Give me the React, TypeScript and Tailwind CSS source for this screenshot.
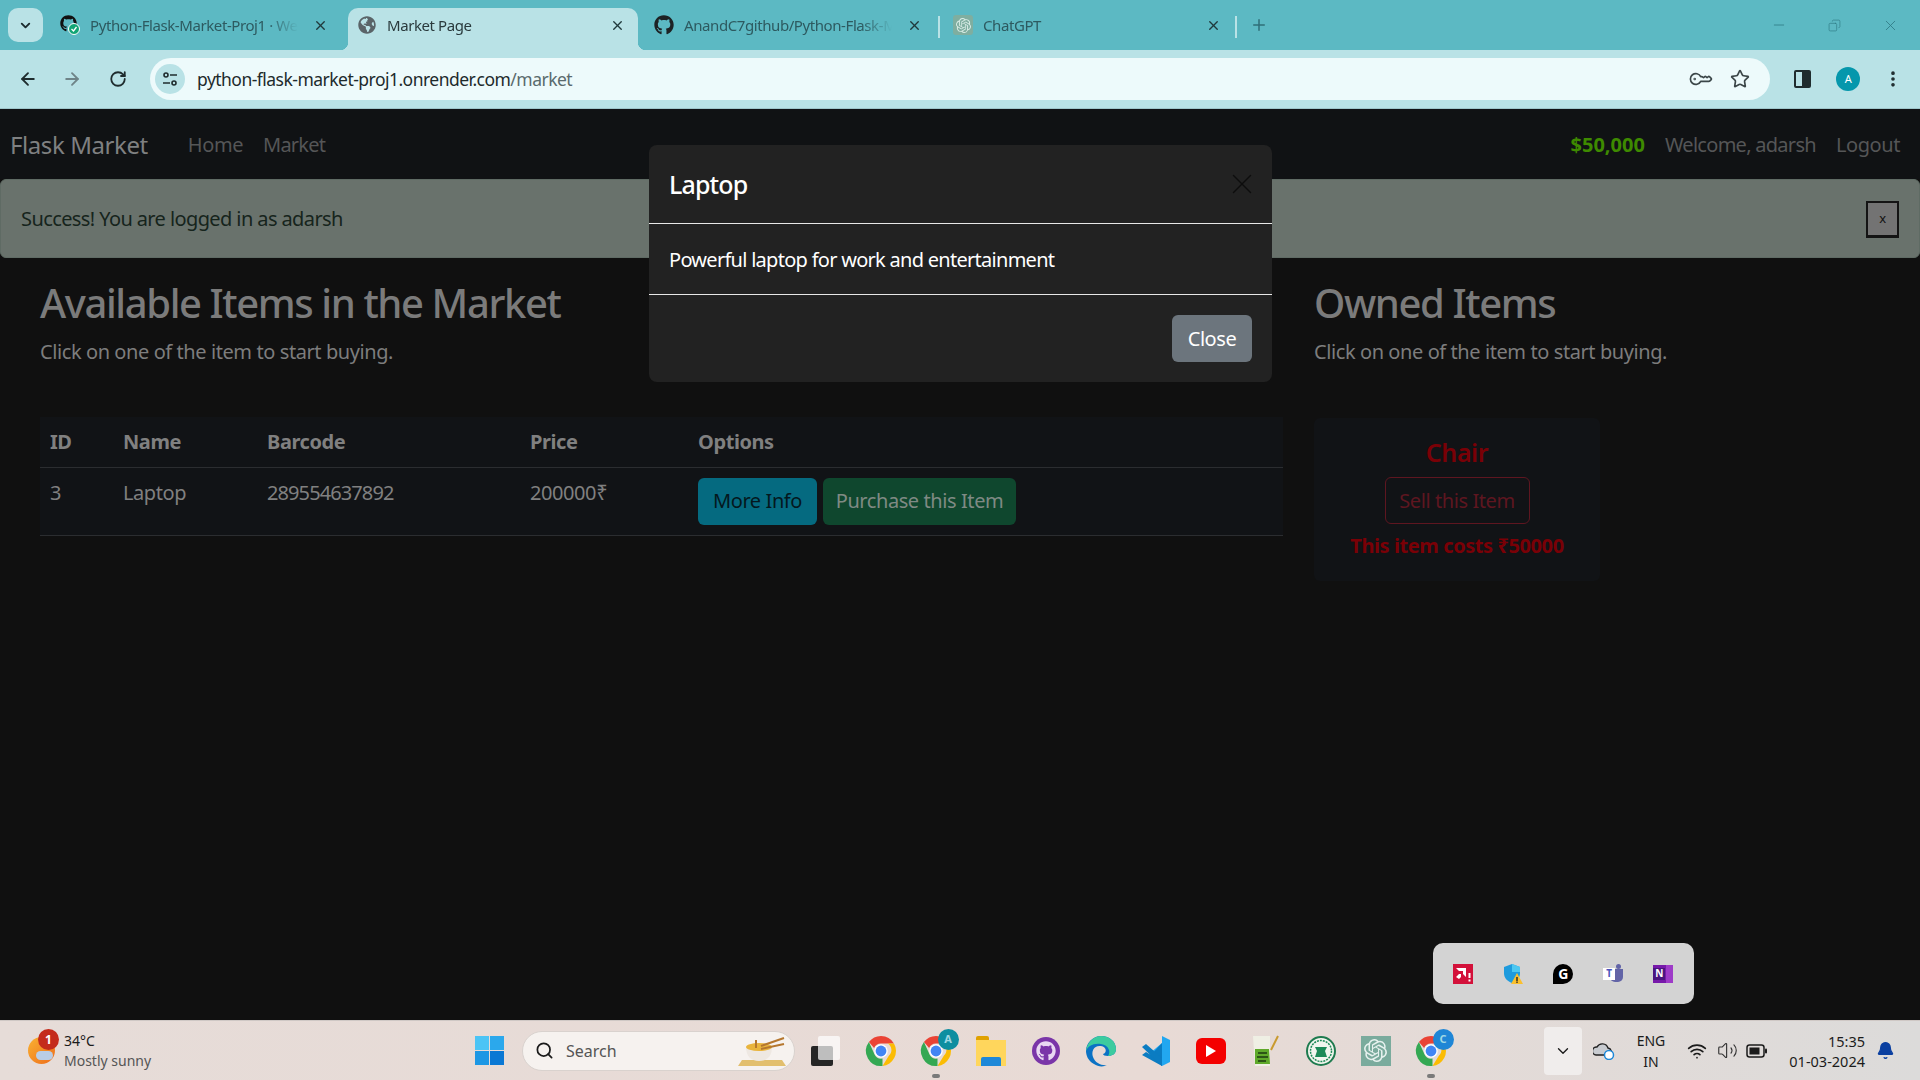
import { ArrowLeft, ArrowRight, RotateCw, ChevronDown, X, Plus, Minus, Star, KeyRound, EllipsisVertical, Search, Bell, Wifi, Volume2, Copy } from "lucide-react";
import { FaGithub, FaGlobeAmericas } from "react-icons/fa";
import { SiOpenai } from "react-icons/si";
import type { ReactNode } from "react";

const ui = "font-['Noto_Sans','Open_Sans',sans-serif] tracking-[-0.026em]";

function ChromeIcon({ size = 36 }: { size?: number }) {
    return (
        <svg width={size} height={size} viewBox="0 0 48 48">
            <path d="M24 4a20 20 0 0 1 17.3 10H24a10 10 0 0 0-9.2 6L7.900 12.100A20 20 0 0 1 24 4z" fill="#EA4335" />
            <path d="M41.300 14A20 20 0 0 1 26 43.900L34.600 30A10 10 0 0 0 33 14z" fill="#FBBC04" />
            <path d="M26 43.900A20 20 0 0 1 7.900 12.100L15.600 29a10 10 0 0 0 10.400 5z" fill="#34A853" />
            <circle cx="24" cy="24" r="9" fill="#fff" />
            <circle cx="24" cy="24" r="7.200" fill="#4285F4" />
        </svg>
    );
}

function ProfileChrome({ letter, color }: { letter: string; color: string }) {
    return (
        <div className="relative">
            <ChromeIcon />
            <div className="absolute -right-[5px] -top-[4px] flex h-[21px] w-[21px] items-center justify-center rounded-full text-[11px] font-bold text-[#9fd8e4]" style={{ background: color }}>
                {letter}
            </div>
        </div>
    );
}

function TaskIcon({ children, running }: { children: ReactNode; running?: boolean }) {
    return (
        <div className="relative flex h-[48px] w-[55px] items-center justify-center">
            {children}
            {running && <div className="absolute bottom-[-3px] h-[4px] w-[8px] rounded-full bg-[#7a7a7a]" />}
        </div>
    );
}

function BrowserTab({ icon, title, active }: { icon: ReactNode; title: string; active?: boolean }) {
    return (
        <div className="relative flex h-[42px] w-[297px] items-center pb-[8px]">
            {active && (
                <>
                    <div className="absolute inset-y-0 left-[3px] right-[4px] rounded-t-[10px] bg-[#B9E2E6]" />
                    <div className="absolute bottom-0 left-[-5px] h-[8px] w-[8px] bg-[radial-gradient(circle_at_0_0,transparent_8px,#B9E2E6_8.5px)]" />
                    <div className="absolute bottom-0 right-[-4px] h-[8px] w-[8px] bg-[radial-gradient(circle_at_100%_0,transparent_8px,#B9E2E6_8.5px)]" />
                </>
            )}
            <div className="relative ml-[12px] flex h-[20px] w-[20px] items-center justify-center">{icon}</div>
            <div className={`relative ml-[10px] w-[208px] overflow-hidden whitespace-nowrap text-[15px] [mask-image:linear-gradient(to_right,black_85%,transparent)] ${active ? "text-[#2a3a3d]" : "text-[#2d5a60]"}`}>
                {title}
            </div>
            <X size={15} strokeWidth={2.2} className="relative ml-[15px] text-[#20393c]" />
        </div>
    );
}

function BrowserChrome() {
    return (
        <div className="flex flex-col">
            <div className="flex h-[50px] bg-[#5CB9C3] pt-[8px]">
                <div className="ml-[8px] flex h-[34px] w-[35px] items-center justify-center rounded-[10px] bg-[#B9E2E6]">
                    <ChevronDown size={15} strokeWidth={3} className="text-[#1b2b2e]" />
                </div>
                <div className="w-[5px]" />
                <BrowserTab
                    title="Python-Flask-Market-Proj1 · Web Service"
                    icon={
                        <div className="relative h-[20px] w-[20px]">
                            <FaGithub size={17} className="text-[#111]" />
                            <svg width="12" height="12" viewBox="0 0 12 12" className="absolute bottom-0 right-0">
                                <circle cx="6" cy="6" r="5.500" fill="#12a575" stroke="#fff" />
                                <path d="M3.500 6l2 2 3-4" fill="none" stroke="#fff" strokeWidth="1.300" />
                            </svg>
                        </div>
                    }
                />
                <BrowserTab active title="Market Page" icon={<FaGlobeAmericas size={18} className="text-[#5a6468]" />} />
                <BrowserTab title="AnandC7github/Python-Flask-Market" icon={<FaGithub size={20} className="text-[#1d2224]" />} />
                <div className="mt-[8px] h-[22px] w-[2px] -translate-x-[1px] bg-[#B9E2E6]" />
                <BrowserTab
                    title="ChatGPT"
                    icon={<div className="flex h-[20px] w-[20px] items-center justify-center rounded-[3px] bg-[#7FAEA0]"><SiOpenai size={15} className="text-[#d9ece6]" /></div>}
                />
                <div className="mt-[8px] h-[22px] w-[2px] -translate-x-[3px] bg-[#B9E2E6]" />
                <Plus size={18} className="mt-[8px] ml-[10px] text-[#2f6f78]" />
                <div className="ml-auto flex items-center pb-[8px] text-[#2f7a84]">
                    <Minus size={16} strokeWidth={1.2} />
                    <Copy size={13} strokeWidth={1.2} className="ml-[41px] -scale-x-100" />
                    <X size={17} strokeWidth={1.2} className="ml-[41px] mr-[21px]" />
                </div>
            </div>
            <div className="flex h-[59px] items-center border-b border-[#9FC6CB] bg-[#B9E2E6]">
                <ArrowLeft size={20} strokeWidth={2.2} className="ml-[18px] text-[#1f2c2e]" />
                <ArrowRight size={20} strokeWidth={2.2} className="ml-[24px] text-[#6f8488]" />
                <RotateCw size={18} strokeWidth={2.4} className="ml-[27px] text-[#1f2c2e]" />
                <div className="ml-[23px] flex h-[42px] w-[1620px] items-center rounded-full bg-[#EDFAFB]">
                    <div className="ml-[5px] flex h-[30px] w-[30px] items-center justify-center rounded-full bg-[#B9E2E6]">
                        <svg width="16" height="16" viewBox="0 0 16 16" fill="none" stroke="#1f2c2e" strokeWidth="1.600">
                            <circle cx="4" cy="4" r="2" />
                            <path d="M8 4h7M1 12h7" />
                            <circle cx="12" cy="12" r="2" />
                        </svg>
                    </div>
                    <div className="ml-[12px] mt-[1px] text-[17.5px] tracking-[-0.03em] text-[#1d2a2c]">
                        python-flask-market-proj1.onrender.com<span className="text-[#5a6a6d]">/market</span>
                    </div>
                    <KeyRound size={20} strokeWidth={2} className="ml-auto rotate-[-135deg] text-[#3b4648]" />
                    <Star size={20} strokeWidth={2} className="ml-[20px] mr-[20px] text-[#3b4648]" />
                </div>
                <div className="ml-[24px] flex h-[18px] w-[17px] rounded-[2px] border-[2.5px] border-[#1f2c2e]">
                    <div className="ml-auto h-full w-[7px] bg-[#1f2c2e]" />
                </div>
                <div className="ml-[25px] flex h-[24px] w-[24px] items-center justify-center rounded-full bg-[#0597AC] text-[11px] text-white">A</div>
                <EllipsisVertical size={20} strokeWidth={2.4} className="ml-[23px] text-[#1f2c2e]" />
            </div>
        </div>
    );
}

function Market() {
    return (
        <div className="h-[911px] bg-[#101010]">
            <div className="flex h-[70px] items-center bg-[#101214] pl-[10px] pr-[20px] pt-[2px] text-[20px] text-[#555657]">
                <div className="text-[24px] text-[#7f8081]">Flask Market</div>
                <div className="ml-[40px]">Home</div>
                <div className="ml-[20px] tracking-[-0.04em]">Market</div>
                <div className="ml-auto font-bold tracking-normal text-[#3E8A00]">$50,000</div>
                <div className="ml-[20px] tracking-[-0.036em]">Welcome, adarsh</div>
                <div className="ml-[20px]">Logout</div>
            </div>
            <div className="flex h-[79px] items-center rounded-[6px] border border-[#5f6b64] bg-[#69726C] pl-[20px] pr-[20px] pt-[1px] text-[20px] tracking-[-0.03em] text-[#16241c]">
                <div>Success! You are logged in as adarsh</div>
                <div className="ml-auto flex h-[37px] w-[33px] items-center justify-center border-2 border-b-[3px] border-[#141414] bg-[#737373] text-[13px] text-[#111]">x</div>
            </div>
            <div className="flex pl-[40px] pt-[15px]">
                <div className="w-[1243px]">
                    <h1 className="text-[40px] font-medium leading-[60px] tracking-[-0.035em] text-[#7b7b7b]">Available Items in the Market</h1>
                    <p className="mt-[4px] text-[20px] leading-[30px] text-[#7d7d7d]">Click on one of the item to start buying.</p>
                    <table className="mt-[50px] w-full table-fixed border-collapse bg-[#111316] text-left text-[20px] text-[#808080]">
                        <colgroup>
                            <col className="w-[72px]" />
                            <col className="w-[144px]" />
                            <col className="w-[263px]" />
                            <col className="w-[168px]" />
                            <col />
                        </colgroup>
                        <thead>
                            <tr className="h-[50px] border-b border-[#2b2d30]">
                                <th className="pl-[10px] font-bold">ID</th>
                                <th className="pl-[11px] font-bold">Name</th>
                                <th className="pl-[11px] font-bold">Barcode</th>
                                <th className="pl-[11px] font-bold">Price</th>
                                <th className="pl-[11px] font-bold">Options</th>
                            </tr>
                        </thead>
                        <tbody>
                            <tr className="h-[68px] border-b border-[#2b2d30] align-top">
                                <td className="pl-[10px] pt-[10px]">3</td>
                                <td className="pl-[11px] pt-[10px]">Laptop</td>
                                <td className="pl-[11px] pt-[10px] tracking-[-0.045em]">289554637892</td>
                                <td className="pl-[11px] pt-[10px]">200000₹</td>
                                <td className="pl-[11px] pt-[10px]">
                                    <div className="flex gap-[6px]">
                                        <button className="h-[47px] w-[119px] rounded-[6px] bg-[#056A80] text-[#04181e]">More Info</button>
                                        <button className="h-[47px] w-[193px] rounded-[6px] bg-[#0F472E] text-[#7f8a84]">Purchase this Item</button>
                                    </div>
                                </td>
                            </tr>
                        </tbody>
                    </table>
                </div>
                <div className="ml-[31px]">
                    <h1 className="text-[40px] font-medium leading-[60px] tracking-[-0.035em] text-[#7b7b7b]">Owned Items</h1>
                    <p className="mt-[4px] text-[20px] leading-[30px] text-[#7d7d7d]">Click on one of the item to start buying.</p>
                    <div className="mt-[51px] flex h-[163px] w-[286px] flex-col items-center rounded-[6px] bg-[#111316] pt-[16px]">
                        <div className="text-[25px] font-semibold leading-[36px] text-[#7A0006]">Chair</div>
                        <button className="mt-[7px] h-[47px] w-[145px] rounded-[6px] border border-[#5e1620] text-[20px] text-[#5e1620]">Sell this Item</button>
                        <div className="mt-[7px] text-[20px] font-bold leading-[30px] text-[#7A0006]">This item costs ₹50000</div>
                    </div>
                </div>
            </div>
        </div>
    );
}

function ItemModal() {
    return (
        <div className="absolute left-[649px] top-[145px] flex h-[237px] w-[623px] flex-col rounded-[8px] bg-[#222222] text-white">
            <div className="flex h-[79px] items-center justify-between border-b border-[#e8e8e8] pl-[20px] pr-[13px]">
                <div className="pt-[2px] text-[25px] font-medium tracking-[-0.034em]">Laptop</div>
                <X size={34} strokeWidth={1} className="text-[#0d0d0d]" />
            </div>
            <div className="flex h-[71px] items-center border-b border-[#e8e8e8] px-[20px] pt-[2px] text-[20px] tracking-[-0.036em]">Powerful laptop for work and entertainment</div>
            <div className="flex flex-1 items-center justify-end px-[20px]">
                <button className="h-[47px] w-[80px] rounded-[6px] bg-[#6C757D] text-[20px]">Close</button>
            </div>
        </div>
    );
}

function TrayPopup() {
    return (
        <div className="absolute left-[1433px] top-[943px] flex h-[61px] w-[261px] items-center rounded-[10px] bg-[#D3D3D3] pl-[5px]">
            <div className="flex w-[50px] justify-center">
                <svg width="20" height="20" viewBox="0 0 20 20">
                    <rect width="20" height="20" fill="#D3113A" />
                    <path d="M3 4h10v9l-3-3V7H6zM3 13l3-3h2v3l-2 2z" fill="#fff" />
                    <rect x="15.500" y="9" width="2" height="5" fill="#fff" />
                    <rect x="15.500" y="15.500" width="2" height="2" fill="#fff" />
                </svg>
            </div>
            <div className="flex w-[50px] justify-center">
                <svg width="20" height="20" viewBox="0 0 20 20">
                    <path d="M9 0l8 3v6c0 5-3 8-8 10-5-2-8-5-8-10V3z" fill="#1E9BDD" />
                    <path d="M9 0l8 3v5H9z" fill="#4CC7F0" />
                    <path d="M14 9l6 11H8z" fill="#FBC02D" />
                    <rect x="13.300" y="13" width="1.400" height="4" fill="#222" />
                    <rect x="13.300" y="17.500" width="1.400" height="1.400" fill="#222" />
                </svg>
            </div>
            <div className="flex w-[50px] justify-center">
                <div className="flex h-[20px] w-[20px] items-center justify-center rounded-[10px] rounded-bl-none bg-black text-[14px] font-bold leading-none text-white">G</div>
            </div>
            <div className="flex w-[50px] justify-center">
                <div className="relative h-[20px] w-[20px]">
                    <div className="absolute right-0 top-[5px] h-[13px] w-[13px] rounded-b-[5px] bg-[#6264A7]" />
                    <div className="absolute right-[2px] top-0 h-[5px] w-[5px] rounded-full bg-[#6264A7]" />
                    <div className="absolute left-0 top-[4px] flex h-[12px] w-[12px] items-center justify-center bg-white text-[10px] font-bold text-[#4B53BC]">T</div>
                </div>
            </div>
            <div className="flex w-[50px] justify-center">
                <div className="relative h-[18px] w-[20px] bg-[#7719AA]">
                    <div className="absolute right-0 top-0 h-full w-[7px] bg-[#9E3BC8]" />
                    <div className="absolute left-0 top-[3px] flex h-[12px] w-[12px] items-center justify-center bg-[#4B1580] text-[10px] font-bold text-white">N</div>
                </div>
            </div>
        </div>
    );
}

function Taskbar() {
    return (
        <div className="flex h-[60px] items-center border-t border-[#cfc8c5] bg-[linear-gradient(90deg,#E6DCD8,#E8DAD5_60%,#DCDBDA)] tracking-normal">
            <div className="relative ml-[28px] h-[27px] w-[27px] rounded-full bg-[linear-gradient(135deg,#F9B233,#EE6C1A)]">
                <div className="absolute bottom-[4px] left-[8px] h-[9px] w-[17px] rounded-full bg-[#b9cde6]" />
                <div className="absolute -top-[8px] left-[10px] flex h-[21px] w-[21px] items-center justify-center rounded-full bg-[#C42B1C] text-[12px] font-bold text-white">1</div>
            </div>
            <div className="ml-[9px] w-[120px] text-[14px] leading-[20px]">
                <div className="text-[#1b1b1b]">34°C</div>
                <div className="text-[#555]">Mostly sunny</div>
            </div>
            <div className="ml-[291px] grid h-[29px] w-[29px] grid-cols-2 gap-[1px]">
                <div className="bg-[#4BC4F5]" />
                <div className="bg-[#2BA8EC]" />
                <div className="bg-[#1C97E4]" />
                <div className="bg-[#0A78D4]" />
            </div>
            <div className="ml-[18px] flex h-[40px] w-[273px] items-center rounded-full border border-[#d9d2ce] bg-[#F6F2EF] pl-[12px]">
                <Search size={19} strokeWidth={2.2} className="text-[#1b1b1b]" />
                <span className="ml-[12px] text-[16px] text-[#555]">Search</span>
                <svg width="55" height="34" viewBox="0 0 55 34" className="ml-auto mr-[5px]">
                    <path d="M4 32l4-6h40l4 6z" fill="#E2BF6E" />
                    <path d="M12 13h26c0 9-5 14-13 14s-13-5-13-14z" fill="#EEE8E2" />
                    <ellipse cx="25" cy="13" rx="13" ry="4" fill="#E9B43C" />
                    <path d="M22 14V6M27 12L50 4M27 15l23-5" stroke="#B5772E" strokeWidth="2" />
                </svg>
            </div>
            <div className="ml-[3px] flex items-center">
                <TaskIcon>
                    <div className="relative h-[30px] w-[30px]">
                        <div className="absolute bottom-0 left-0 h-[20px] w-[22px] rounded-[2px] bg-[#252525]" />
                        <div className="absolute right-[1px] top-0 h-[24px] w-[22px] rounded-[2px] bg-white/70" />
                    </div>
                </TaskIcon>
                <TaskIcon><ChromeIcon /></TaskIcon>
                <TaskIcon running><ProfileChrome letter="A" color="#0E8EA0" /></TaskIcon>
                <TaskIcon>
                    <div className="relative h-[30px] w-[30px]">
                        <div className="absolute left-0 top-0 h-[8px] w-[13px] rounded-t-[2px] bg-[#E0A100]" />
                        <div className="absolute bottom-0 h-[26px] w-[30px] bg-[#FFD65C]" />
                        <div className="absolute bottom-0 left-[5px] h-[9px] w-[20px] rounded-t-[2px] bg-[#1E88D8]" />
                    </div>
                </TaskIcon>
                <TaskIcon>
                    <div className="flex h-[28px] w-[28px] items-center justify-center rounded-full bg-[#7A35A8]">
                        <FaGithub size={20} className="text-[#E9D8F2]" />
                    </div>
                </TaskIcon>
                <TaskIcon>
                    <svg width="32" height="32" viewBox="0 0 32 32">
                        <path d="M16 1c9 0 15 6 15 13 0 5-4 7-8 7-3 0-5-1-5-2 4-1 4-7-2-8C9 10 6 16 8 22c2 6 9 9 14 8-3 2-9 2-13-1C3 26 1 20 1 16 1 8 8 1 16 1z" fill="#0B72C4" />
                        <path d="M1 16C2 8 8 1 16 1c9 0 15 6 15 13 0 5-4 7-8 7 3-4 1-11-7-12C8 8 3 11 1 16z" fill="#3CCB9F" />
                    </svg>
                </TaskIcon>
                <TaskIcon>
                    <svg width="30" height="32" viewBox="0 0 30 32">
                        <path d="M21 1l8 4v22l-8 4-13-12 13-11z" fill="#22A7F0" />
                        <path d="M21 1v30L1 20l4-3 5 3 11-12V1z" fill="#0B7CC2" />
                        <path d="M1 12l4-3 16 14v8z" fill="#0B7CC2" />
                    </svg>
                </TaskIcon>
                <TaskIcon>
                    <div className="flex h-[26px] w-[30px] items-center justify-center rounded-[6px] bg-[#F40000]">
                        <svg width="10" height="12" viewBox="0 0 10 12"><path d="M0 0l10 6-10 6z" fill="#fff" /></svg>
                    </div>
                </TaskIcon>
                <TaskIcon>
                    <svg width="28" height="34" viewBox="0 0 28 34">
                        <path d="M1 2h17v30H3z" fill="#EFEFE4" />
                        <path d="M3 15h14l1 15H3z" fill="#5FA92A" />
                        <path d="M19 16l7-14" stroke="#C99A2E" strokeWidth="2" />
                        <path d="M6 19h9M5 23h11M6 27h8" stroke="#1d3a10" strokeWidth="1.500" />
                    </svg>
                </TaskIcon>
                <TaskIcon>
                    <svg width="30" height="30" viewBox="0 0 30 30">
                        <circle cx="15" cy="15" r="14" fill="#F2F5EE" stroke="#1E7B4F" strokeWidth="2" />
                        <circle cx="15" cy="15" r="10.500" fill="none" stroke="#1E8A58" strokeWidth="1.500" strokeDasharray="2 1" />
                        <path d="M9 11h12l-2 4 2 6H9l2-6z" fill="#1E8A58" />
                    </svg>
                </TaskIcon>
                <TaskIcon>
                    <div className="flex h-[30px] w-[30px] items-center justify-center bg-[#7AAB9D]">
                        <SiOpenai size={23} className="text-[#E6F1EE]" />
                    </div>
                </TaskIcon>
                <TaskIcon running><ProfileChrome letter="C" color="#1F86D6" /></TaskIcon>
            </div>
            <div className="ml-[86px] flex h-[48px] w-[38px] items-center justify-center rounded-[4px] bg-[#F0EDEC]">
                <ChevronDown size={18} strokeWidth={1.8} className="text-[#1b1b1b]" />
            </div>
            <div className="ml-[2px] flex w-[40px] justify-center">
                <svg width="22" height="18" viewBox="0 0 22 18">
                    <path d="M3 13a4 4 0 0 1 1-8 6 6 0 0 1 11 1 4 4 0 0 1 2 7z" fill="#C8CBD0" stroke="#222" strokeWidth="1.400" />
                    <circle cx="16" cy="13" r="4.500" fill="#fff" stroke="#1E88D8" strokeWidth="1.500" />
                </svg>
            </div>
            <div className="ml-[2px] w-[50px] text-center text-[14px] leading-[21px] text-[#1b1b1b]">
                <div>ENG</div>
                <div>IN</div>
            </div>
            <Wifi size={20} strokeWidth={2} className="ml-[11px] text-[#1b1b1b]" />
            <Volume2 size={21} strokeWidth={1.3} className="ml-[10px] text-[#333]" />
            <svg width="22" height="14" viewBox="0 0 22 14" className="ml-[8px]">
                <rect x="1" y="1" width="17" height="12" rx="2.500" fill="none" stroke="#1b1b1b" strokeWidth="1.500" />
                <rect x="3.500" y="3.500" width="10" height="7" fill="#1b1b1b" />
                <rect x="19" y="4.500" width="2" height="5" rx="1" fill="#1b1b1b" />
            </svg>
            <div className="ml-[17px] w-[80px] whitespace-nowrap text-right text-[14.5px] leading-[20px] text-[#1b1b1b]">
                <div>15:35</div>
                <div>01-03-2024</div>
            </div>
            <Bell size={19} fill="#0A3FA0" strokeWidth={1.5} className="ml-[11px] text-[#0A3FA0]" />
        </div>
    );
}

export default function App() {
    return (
        <div className={`relative h-[1080px] w-[1920px] overflow-hidden ${ui}`}>
            <BrowserChrome />
            <Market />
            <Taskbar />
            <ItemModal />
            <TrayPopup />
        </div>
    );
}
